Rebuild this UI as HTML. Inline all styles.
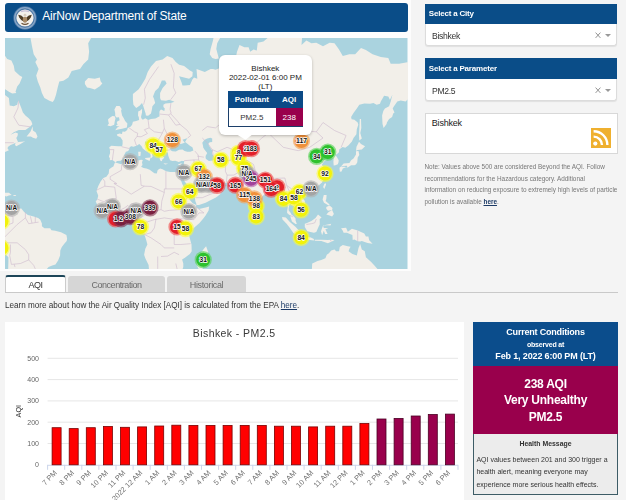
<!DOCTYPE html>
<html><head><meta charset="utf-8">
<style>
*{margin:0;padding:0;box-sizing:border-box}
html,body{width:626px;height:500px;overflow:hidden;background:#f4f4f4;font-family:"Liberation Sans",sans-serif;position:relative}
.a{position:absolute}
.t{position:absolute;white-space:nowrap;line-height:1}
#leftbg{left:0;top:0;width:410.5px;height:271px;background:#fdfdfd}
#hdr{left:5px;top:3px;width:403px;height:29px;background:#0a4d88;border-radius:3px}
#seal{left:13px;top:6px;width:23px;height:23px;border-radius:50%;background:#3f6fa0}
#map{left:5px;top:37.5px;width:402.5px;height:231px;background:#aad3df;overflow:hidden}
.sh{background:#0a4d88;color:#fff;font-weight:bold;font-size:8px;letter-spacing:-0.15px}
.sel{background:#fff;border:1px solid #dcdcdc;border-top:none;border-radius:0 0 3px 3px;box-shadow:0 1px 1px rgba(0,0,0,.08)}
.tab{background:#d6d6d6;border-radius:3px 3px 0 0;color:#777;font-size:9px;text-align:center}
#wrap{position:absolute;left:0;top:0;width:626px;height:500px;filter:blur(0.3px)}
</style></head><body><div id="wrap">
<div class="a" id="leftbg"></div>
<div class="a" id="hdr"></div>
<svg class="a" style="left:13px;top:6px" width="24" height="24" viewBox="0 0 24 24"><circle cx="12" cy="12" r="11.7" fill="#4d78a6"/><circle cx="12" cy="12" r="10.3" fill="none" stroke="#8aa8c8" stroke-width="1.2"/><circle cx="12" cy="12" r="8.6" fill="#f3f1ec"/><path d="M5.2 8.8 Q8.5 9 10.6 11.5 L10.6 15.5 Q8 14.5 6.2 11.5Z M18.8 8.8 Q15.5 9 13.4 11.5 L13.4 15.5 Q16 14.5 17.8 11.5Z" fill="#4e3d26"/><ellipse cx="12" cy="13.8" rx="2.2" ry="3" fill="#a88a66"/><circle cx="12" cy="9.2" r="1.4" fill="#d8cfc0"/><path d="M8.5 17.2 Q12 19.5 15.5 17.2" stroke="#6e5236" stroke-width="1.1" fill="none"/><path d="M8 5.5 Q12 4.2 16 5.5" stroke="#c8c0d8" stroke-width="1.4" fill="none"/></svg>
<div class="t" style="left:42.3px;top:10.3px;font-size:12px;letter-spacing:-0.2px;color:#fff">AirNow Department of State</div>
<!--MAP--><svg class="a" style="left:5px;top:37.5px" width="402.5" height="231" viewBox="0 0 402.5 231">
<rect width="402.5" height="231" fill="#aad3df"/>
<path fill="#f2efe9" d="M110.3,124.3L109.8,124.8L108.4,128.4L107.0,129.2L104.2,131.3L103.7,135.4L101.4,138.8L98.3,140.1L95.6,143.5L93.3,147.9L91.5,153.0L92.7,156.2L93.2,157.8L92.3,161.4L90.7,163.6L91.8,165.7L92.0,167.7L94.8,169.9L97.0,172.4L97.8,174.1L99.8,176.1L101.7,177.8L106.4,180.8L107.2,180.9L113.0,179.4L116.3,180.3L119.3,179.1L121.6,178.1L125.2,177.6L127.9,178.6L129.5,181.1L132.0,180.8L133.7,180.6L135.6,181.6L135.8,184.1L135.3,186.5L135.0,189.0L134.1,189.9L136.1,193.2L139.1,196.0L139.9,198.1L141.4,202.8L142.4,206.5L140.3,210.7L139.1,216.7L140.3,220.2L143.6,227.1L144.1,232.7L144.4,240.2L174.1,240.2L178.3,229.1L178.3,225.5L177.5,222.8L177.1,221.6L179.9,219.8L184.9,215.9L186.7,213.3L186.5,206.5L184.6,199.5L184.1,196.5L185.2,194.8L187.4,191.5L189.9,188.9L194.5,184.9L198.1,180.8L200.6,177.4L203.6,172.4L204.2,168.6L200.6,169.4L194.0,170.9L191.0,168.9L191.2,167.2L191.5,167.0L194.0,166.9L200.6,164.8L205.9,161.9L210.5,159.7L213.0,157.9L215.1,156.2L216.8,153.6L218.4,150.2L216.5,148.0L213.7,146.4L212.7,144.6L212.7,142.9L213.5,141.6L215.5,144.0L221.3,145.1L229.5,144.8L230.7,145.9L231.2,147.3L232.8,148.8L233.7,150.2L235.3,152.7L238.9,151.8L239.6,152.7L239.9,156.2L241.6,162.3L243.2,166.7L244.9,169.9L245.6,171.6L247.7,174.8L248.9,173.4L250.7,171.1L251.5,169.1L252.3,166.4L251.8,162.3L255.6,160.4L257.3,158.5L260.1,155.7L263.1,153.9L263.4,151.8L265.4,151.4L267.5,151.1L270.0,150.0L271.3,150.4L272.2,153.0L274.2,155.3L275.5,157.9L275.5,161.4L277.5,161.7L279.9,160.5L280.9,160.7L281.1,163.1L282.4,166.5L282.8,169.1L282.1,173.3L282.1,175.1L284.1,176.8L285.4,177.4L285.6,179.4L287.0,183.6L290.5,186.1L291.2,186.1L291.8,185.9L290.5,182.2L290.7,180.8L288.5,177.9L286.6,176.8L285.4,174.4L283.7,172.4L283.6,170.7L284.1,167.4L284.9,166.0L285.7,165.7L286.6,167.0L289.0,167.9L289.9,169.1L292.3,170.7L292.8,173.9L295.3,172.4L296.1,171.1L299.0,169.6L300.1,168.7L300.3,165.7L299.6,162.4L298.5,161.2L296.1,158.8L294.3,156.6L295.6,153.9L296.0,153.0L298.1,151.8L299.8,151.8L301.9,153.9L302.3,152.3L304.7,151.3L307.4,150.6L308.5,150.4L311.3,149.3L313.0,148.2L314.7,146.6L317.1,144.6L317.3,143.7L318.8,140.9L320.4,139.0L321.1,136.4L321.1,134.3L319.6,132.3L319.1,131.2L318.0,128.4L316.8,126.8L318.5,124.3L319.6,123.1L322.1,121.7L320.4,121.3L318.0,121.7L316.3,121.3L315.5,119.8L314.2,118.1L316.8,116.4L319.6,114.2L321.8,114.9L320.1,118.1L320.6,118.3L323.7,116.4L325.1,116.2L326.2,117.0L326.6,119.8L328.7,121.3L328.4,123.7L328.7,127.4L330.4,127.2L332.8,126.2L333.5,124.3L333.7,122.3L332.0,119.2L330.4,117.0L332.0,116.0L334.0,114.2L334.2,111.6L337.6,109.1L340.3,109.8L343.6,107.3L346.9,103.6L348.5,100.0L351.4,96.3L351.8,91.2L353.3,86.7L352.7,84.5L349.4,81.7L346.6,81.2L346.1,78.9L348.5,75.1L351.8,70.5L354.3,66.7L359.3,65.4L365.1,65.8L368.4,65.1L371.7,66.7L375.0,65.8L375.8,63.5L379.1,57.7L383.3,58.4L384.9,61.8L387.4,56.7L385.7,63.5L384.1,68.3L379.9,70.5L378.3,73.0L377.1,77.4L377.5,85.9L378.6,89.9L381.6,85.9L381.9,84.5L384.1,80.9L387.1,78.9L388.2,75.4L389.5,74.5L387.7,70.5L389.0,68.3L392.3,63.5L395.7,62.5L400.6,63.5L402.3,61.8L417.1,56.7L417.1,28.6L408.9,24.8L402.3,24.3L394.0,25.8L385.7,25.8L383.3,19.9L375.8,18.9L367.6,16.3L360.9,12.1L356.0,9.9L350.2,16.3L344.4,16.3L337.8,17.9L333.7,11.0L329.5,5.3L324.6,4.7L318.0,8.2L311.3,4.7L306.4,5.3L301.4,2.4L296.5,7.1L298.1,-13.9L284.9,-25.1L263.4,-25.1L263.4,-0.7L258.5,3.6L252.7,4.7L251.8,12.6L248.5,11.5L245.2,13.7L243.6,9.3L239.4,9.3L234.5,7.1L232.0,13.7L230.4,21.4L230.0,26.2L227.0,27.7L220.4,24.8L216.3,29.5L210.5,31.8L208.0,30.9L205.6,30.9L199.8,34.0L191.5,30.9L192.3,40.7L189.0,39.5L187.4,41.6L184.9,47.1L179.9,47.5L177.5,47.5L176.6,44.4L174.1,38.2L179.1,39.5L184.1,40.7L187.4,38.2L187.7,34.0L184.9,32.6L179.1,28.1L174.1,26.7L170.8,23.9L167.5,19.9L162.2,17.9L157.6,21.4L151.0,22.9L146.0,28.6L142.7,34.0L140.3,40.7L137.0,46.3L133.7,51.2L127.9,56.0L127.9,61.8L128.4,66.7L131.2,69.9L134.5,67.7L137.0,65.1L138.1,67.4L139.1,70.8L140.6,75.4L140.9,77.4L143.1,77.7L146.0,75.4L146.9,71.5L147.4,68.3L150.2,65.1L149.0,60.8L148.0,58.4L150.2,53.1L153.5,50.1L155.6,45.5L156.8,42.4L160.1,42.4L161.6,45.5L157.6,50.1L155.1,54.9L155.1,60.1L156.0,62.2L160.9,62.8L164.2,61.8L169.5,63.8L165.9,65.1L160.4,65.4L158.4,66.7L158.4,69.0L159.8,70.5L159.3,73.0L156.0,71.5L154.6,73.0L154.3,76.0L154.6,78.3L152.7,79.2L150.5,80.6L146.0,80.9L143.1,82.0L140.3,80.3L137.8,81.7L136.5,80.6L136.0,78.9L137.0,74.5L137.1,70.8L135.3,72.4L133.2,73.6L133.0,77.4L133.8,79.2L134.1,82.0L131.2,83.1L127.9,83.7L127.2,86.4L125.9,88.6L123.7,89.6L122.6,90.2L122.2,92.0L119.9,93.8L117.5,93.5L117.0,96.0L114.6,95.5L111.8,96.5L112.5,98.0L115.5,99.2L117.6,102.4L117.6,105.9L117.1,108.2L113.3,108.2L106.4,107.7L104.2,109.3L104.9,111.6L105.1,114.9L103.9,118.5L104.9,120.4L104.7,122.3L107.4,121.9L109.2,123.3L110.3,124.3Z"/>
<path fill="#aad3df" d="M110.3,124.6L116.3,126.2L118.6,125.0L124.6,122.7L129.5,122.3L133.7,122.5L136.0,121.7L137.8,122.1L137.0,124.3L137.5,127.0L136.1,128.8L138.6,130.0L141.4,130.6L144.7,131.7L149.4,135.2L151.8,135.6L152.7,132.1L155.1,130.6L157.6,131.2L159.3,132.3L161.3,133.3L165.1,133.9L169.0,133.9L173.0,133.7L176.1,133.7L177.1,132.1L177.5,130.8L178.3,128.6L178.9,126.4L178.8,125.4L179.3,123.1L177.5,123.1L177.0,122.7L173.8,124.1L170.3,122.7L167.5,123.1L165.1,122.3L163.9,119.4L163.1,117.0L163.1,116.0L162.6,114.2L157.5,114.7L158.6,116.4L157.3,118.1L159.3,119.8L158.8,120.2L157.5,121.3L156.8,123.3L155.5,122.7L154.5,120.6L155.1,119.2L153.8,117.7L151.8,114.9L151.7,112.0L150.2,110.7L146.7,108.2L144.4,105.9L143.4,104.0L142.4,103.3L139.9,103.8L140.1,106.6L141.9,108.0L143.6,111.1L146.0,112.7L147.5,113.6L149.2,114.7L150.2,115.7L148.0,115.1L146.9,117.0L147.9,118.1L146.9,119.4L145.4,120.4L145.7,117.0L144.9,115.5L143.1,114.2L141.1,113.1L139.9,112.2L137.8,110.5L136.6,108.2L134.3,106.1L132.0,107.5L128.5,108.7L126.2,108.2L124.6,109.3L124.6,110.5L123.2,112.9L120.9,113.8L119.1,117.0L119.9,118.7L117.9,121.0L115.6,122.7L112.3,122.9L110.7,124.1ZM167.5,113.3L170.8,113.6L174.1,111.8L177.5,111.6L179.6,113.1L182.4,113.8L185.2,113.8L188.4,112.5L187.4,109.3L185.2,108.0L182.1,105.4L180.1,104.0L182.4,100.0L184.4,99.5L177.5,101.7L179.8,104.7L175.8,106.1L175.0,105.7L173.3,103.8L175.0,102.4L170.3,101.2L168.7,103.6L167.0,106.6L165.9,108.9L165.1,110.5L165.9,112.5ZM200.6,101.2L198.9,102.4L197.3,104.7L198.1,108.2L198.1,109.3L199.4,111.6L202.2,115.1L200.6,118.1L200.6,120.2L201.4,121.3L203.9,122.9L208.0,122.5L208.9,121.5L208.5,118.1L207.2,116.0L206.9,113.8L208.0,112.7L206.4,111.6L204.2,108.0L203.1,105.9L204.7,104.3L207.2,104.0L207.2,100.5L205.4,99.7L202.2,100.5ZM173.3,136.2L175.0,139.6L175.5,141.3L177.5,146.4L179.9,150.9L181.1,155.2L183.2,157.9L184.9,162.1L187.7,165.2L190.2,166.5L191.2,167.2L191.5,166.2L190.3,163.1L190.0,160.5L189.9,159.7L187.4,156.2L184.4,151.8L182.4,147.3L179.9,143.7L177.6,139.8L177.3,137.1L176.1,140.3L173.5,136.4ZM213.0,141.6L212.7,141.5L209.7,142.6L206.4,141.1L203.6,138.3L202.2,136.0L199.8,136.2L198.9,137.5L200.3,140.7L202.2,142.7L203.6,144.6L204.2,143.5L204.9,145.1L204.7,146.8L209.5,146.4L211.0,145.0L212.2,143.7L212.7,142.9Z"/>
<path fill="#f2efe9" d="M3.9,-42.5L25.4,-0.7L27.0,8.2L28.7,16.3L32.0,21.4L30.3,23.9L33.6,30.9L31.2,37.4L32.8,43.6L35.3,49.4L36.9,54.9L39.4,60.1L44.4,62.8L47.7,64.1L49.3,61.8L51.0,56.7L52.7,49.4L54.3,43.6L58.4,42.8L63.4,39.5L66.7,33.1L75.0,30.9L78.3,26.2L83.2,21.4L84.1,13.7L83.2,5.3L86.5,-0.7L89.8,-42.5ZM79.9,43.6L83.2,39.9L89.8,40.7L94.8,39.5L95.6,43.2L97.3,45.5L94.8,48.2L89.8,51.6L84.9,50.1L82.1,49.4L79.9,45.9ZM110.2,92.2L113.0,91.5L117.1,90.7L121.9,89.4L122.4,85.6L120.1,83.1L118.8,80.3L117.1,77.4L116.1,72.7L116.6,71.1L114.6,68.0L111.3,68.0L109.4,71.5L110.2,75.1L110.2,78.0L111.5,79.5L114.0,79.2L114.6,82.3L112.2,83.4L111.7,85.1L112.7,86.4L110.8,87.8L112.7,88.3L114.6,88.6L112.2,89.4ZM109.7,78.3L107.5,78.0L105.5,79.2L103.1,81.2L103.2,83.1L103.9,85.6L102.4,87.5L105.5,88.3L109.2,86.7L109.7,83.7L110.5,80.3ZM140.1,120.0L145.4,119.6L144.6,122.9L140.3,121.0ZM133.2,113.8L135.8,113.8L135.5,117.7L133.5,118.3ZM158.4,125.2L163.1,125.8L160.1,126.6ZM173.0,126.4L176.8,125.0L175.6,127.2L173.3,127.0ZM251.5,171.9L252.3,171.9L255.0,175.8L253.8,177.9L252.2,178.3L251.5,175.8ZM201.1,208.2L203.1,214.1L201.6,216.7L198.9,223.7L197.6,230.9L194.0,231.8L191.8,227.3L192.8,221.9L192.3,216.7L196.1,214.7L198.9,210.7ZM320.4,145.0L321.1,146.4L319.3,150.9L318.1,149.1L319.3,145.9ZM299.1,155.9L302.3,154.3L303.1,155.2L301.4,157.6L299.3,157.1ZM336.0,128.4L338.6,125.6L344.4,125.0L346.1,122.3L348.5,120.4L351.0,116.4L351.0,113.3L353.5,112.9L354.3,117.0L352.7,119.6L352.3,124.3L351.0,126.4L349.4,127.2L346.1,127.2L342.8,129.4L339.4,128.8ZM336.1,128.6L334.5,129.8L334.8,133.7L336.6,133.5L337.8,130.4L342.3,128.8L341.9,127.8L337.8,128.0ZM351.0,112.7L351.5,108.7L354.0,103.8L356.0,105.9L360.1,108.2L356.8,111.6L352.7,112.0ZM354.3,102.4L356.8,100.5L355.3,95.0L356.3,89.9L356.0,80.9L354.8,80.9L354.3,91.2L354.0,97.5ZM318.8,157.1L321.6,157.1L321.3,160.9L320.6,163.1L324.6,166.5L323.7,167.4L319.0,164.8L317.6,161.4ZM321.3,169.1L324.6,167.4L327.5,169.9L327.1,171.9L322.9,172.8L321.3,170.7ZM321.3,176.6L323.7,174.1L327.1,172.1L328.9,176.1L327.1,178.6L324.6,177.4ZM299.8,185.7L301.4,185.2L306.4,182.9L310.5,179.9L313.0,176.6L316.6,179.6L314.7,181.1L314.7,186.5L313.8,188.2L311.3,194.0L308.9,194.8L302.3,193.2L299.8,189.0ZM277.1,178.9L280.8,179.6L284.9,184.1L290.7,189.0L294.5,193.2L294.8,197.8L292.3,198.0L288.2,194.8L284.9,189.9L281.6,185.7L277.5,181.6ZM293.5,199.5L294.8,198.1L298.6,198.6L303.1,199.0L305.9,199.6L308.9,201.1L308.9,202.5L303.1,201.8L298.1,201.1L294.8,200.5ZM309.7,201.8L316.3,201.8L322.9,202.0L326.2,201.8L329.5,202.0L327.9,203.1L322.9,205.3L316.3,203.1L309.7,202.8ZM317.1,197.3L318.8,192.7L320.1,196.0L322.6,196.1L320.4,191.2L323.4,189.9L318.8,189.9L318.0,187.4L326.2,185.7L325.4,187.5L318.3,186.9L317.1,189.9L316.0,193.2ZM336.1,190.3L341.1,189.7L342.8,193.7L346.9,190.7L352.7,192.5L359.3,195.6L360.9,198.6L363.4,198.5L364.2,202.3L367.6,205.7L362.6,205.0L356.8,203.1L355.2,203.6L352.7,203.3L349.4,201.5L347.7,202.1L347.4,197.1L341.9,194.8L338.6,194.8L337.8,192.8ZM306.4,240.2L307.2,225.5L308.4,225.1L312.5,223.0L316.3,221.9L320.4,220.2L321.8,216.7L323.9,215.3L326.2,212.6L329.5,211.6L331.2,213.3L334.0,213.3L334.8,209.0L337.8,207.0L342.8,208.2L345.6,208.7L344.4,210.7L343.6,213.3L347.4,215.9L351.8,217.6L353.5,209.9L355.2,206.0L356.8,211.6L359.8,213.3L360.9,219.3L365.9,223.7L369.2,227.3L372.5,230.9L372.5,240.2ZM-3.5,157.3L-0.7,154.6L3.9,154.8L6.7,156.9L3.9,157.6L1.4,158.6L-1.1,157.6ZM-12.6,149.1L-7.7,150.9L-3.1,154.1L-8.5,154.6L-12.6,151.8ZM8.5,157.1L11.2,157.3L10.8,157.9L8.5,157.9ZM-12.6,173.3L-7.7,174.1L-6.0,172.4L-5.2,170.7L-2.7,169.6L-0.1,168.6L1.4,167.5L1.4,169.9L0.9,170.4L3.9,169.1L3.9,168.2L6.4,170.7L8.8,170.6L13.8,170.7L16.3,170.4L17.9,172.4L19.1,174.1L22.9,176.9L28.7,178.4L33.1,180.1L35.3,181.7L36.9,185.4L36.9,188.2L39.4,190.3L45.2,190.3L46.4,192.3L50.2,192.8L56.0,194.3L61.4,197.1L62.1,200.6L61.7,203.1L59.3,205.8L56.8,209.0L55.3,212.4L55.1,217.6L53.1,222.5L50.5,226.4L47.2,227.6L43.6,229.1L40.3,232.7L3.1,232.7L3.4,223.7L3.4,219.3L1.4,217.2L-1.9,215.5L-6.0,211.6L-12.6,201.5ZM-29.2,126.4L-6.0,126.4L-2.7,114.9L0.6,113.8L3.9,112.2L2.6,110.5L2.9,109.1L5.5,107.1L8.8,105.7L10.5,104.7L13.0,104.0L11.3,100.0L12.5,98.0L13.0,95.5L10.5,94.5L5.5,96.8L8.8,94.3L13.8,92.0L20.4,92.0L25.0,88.8L27.4,86.2L26.2,83.1L23.7,80.3L20.4,77.4L17.9,74.5L16.3,69.9L13.3,62.5L12.2,66.7L8.8,68.3L4.7,67.4L3.9,60.1L0.6,57.4L-2.7,55.6L-9.3,55.6L-29.2,56.7ZM10.0,107.1L11.3,108.2L15.5,105.9L20.4,102.9L18.8,103.6L13.8,104.0L10.5,104.7ZM21.6,98.5L25.4,93.8L27.7,88.3L27.9,92.5L30.8,94.5L32.5,98.5L31.2,100.7L27.9,99.7L25.9,98.5ZM17.3,39.1L14.6,45.5L12.2,48.6L10.5,53.8L11.3,54.9L7.2,55.6L3.9,53.8L0.6,51.6L-4.4,48.2L-9.3,47.5L-12.6,51.2L-29.2,-3.8L-12.6,4.2L-7.7,9.9L-2.7,13.7L2.2,20.9L6.4,22.4L8.8,27.7L9.7,33.1L14.6,37.4ZM204.7,16.3L207.2,19.9L210.5,20.9L213.8,20.4L211.3,11.0L212.2,5.3L217.1,-3.8L218.8,-13.9L210.5,-10.4L208.0,2.4L205.6,11.0Z"/>
<path fill="none" stroke="#cdb9cd" stroke-width="0.6" d="M165.9,26.2L169.2,35.3L168.4,49.4L170.8,54.9L165.6,61.8M153.5,28.6L144.4,41.6L139.4,51.2L140.3,60.1L138.6,66.7M165.9,65.1L165.1,71.5L166.2,75.4L163.4,76.9L154.3,76.0M158.4,81.7L159.3,90.4L157.3,95.0L149.4,93.8L144.1,89.9L143.1,82.0M144.1,89.9L139.4,91.7L142.4,95.5L136.1,98.8L132.0,98.5L132.8,95.3L129.5,93.8L123.7,89.6M132.0,98.5L129.5,101.9L131.2,107.1L132.0,107.5M116.6,108.7L124.9,110.7M104.9,111.6L108.9,111.6L108.0,117.0L107.4,121.9M159.3,90.4L162.6,96.8L166.2,103.6L168.7,104.0M157.3,95.0L156.0,97.5L152.7,102.9L146.0,101.2L142.4,103.3M156.8,106.4L166.2,103.6M151.8,111.6L156.8,113.3L162.6,112.2L165.9,111.6M163.4,76.9L170.8,87.2L175.0,86.4L182.4,92.5L185.7,97.5L182.7,100.0M165.9,76.0L172.5,83.1L175.0,86.4M197.3,92.5L202.2,88.6L210.5,89.9L220.4,81.7L233.7,78.9L245.2,81.7L251.8,89.9L263.4,95.0L281.6,87.2L296.5,92.5L311.3,93.8L318.0,84.5L329.5,92.5L341.1,97.5L336.1,109.3M263.4,95.0L278.3,109.3L293.2,112.7L304.7,109.3L318.0,100.0L311.3,93.8M197.3,100.0L202.2,104.7L207.2,111.6L212.2,113.8L222.1,109.3L233.7,113.8L241.9,109.3L251.8,104.7L256.8,100.0L263.4,95.0M207.2,111.6L208.9,121.7L220.4,123.3L227.0,121.7L237.0,122.3L241.9,122.3M192.3,118.1L198.9,119.2M220.4,123.3L220.4,133.3L222.1,137.1L221.3,145.1M241.9,122.3L235.3,129.4L233.7,134.3L228.7,137.1L222.1,137.1M241.9,122.3L248.5,126.4L250.2,132.3L253.5,136.2L265.1,140.3L271.7,140.3L279.9,140.0L281.6,147.3L286.6,150.9L294.8,149.5L298.1,151.8M241.9,122.3L243.6,131.3L237.0,140.0L235.3,146.4L232.8,148.2M265.1,150.9L266.7,143.7L271.7,145.5L272.5,152.7M281.6,147.3L284.9,154.5L293.2,157.9L296.5,164.8L294.8,169.9M284.9,154.5L286.6,157.9L291.5,163.1L289.0,168.2M284.9,177.4L287.4,178.6L288.5,177.9M179.1,122.7L189.0,121.9L193.7,121.9L193.2,117.0L189.9,113.1M179.9,137.1L180.8,133.3L184.1,132.3L197.3,138.1L198.9,139.0M184.1,132.3L189.0,127.4L189.0,121.9M193.7,121.9L195.6,125.4L195.6,130.4L198.9,136.2M178.3,130.4L179.9,131.3L184.1,132.3M190.7,159.7L197.3,159.7L205.6,156.2L210.5,154.5L211.3,149.7L204.7,146.8M116.8,126.4L116.3,132.3L105.2,138.6L105.2,141.3L111.7,145.5L108.9,145.5L121.6,153.0L126.2,156.2L139.4,148.2L146.0,148.4L159.3,154.5L159.3,150.9L160.9,150.9L160.9,133.3M135.3,136.2L136.1,147.3L139.4,148.2M160.9,150.9L180.4,150.9M98.1,140.7L99.8,143.7L99.8,148.2L91.5,152.2M99.8,148.2L109.7,149.1L111.3,160.5L100.6,162.3L99.4,164.0L92.3,161.1M124.6,169.1L126.2,165.7L132.8,166.5L141.9,165.7L144.4,171.6L145.2,174.9L156.0,171.6L159.3,173.3L164.2,172.4L175.8,171.6L179.1,164.8L182.4,158.8M159.3,154.5L156.8,163.1L156.0,171.6M139.4,184.9L149.4,181.6L159.3,179.9L170.8,181.6L175.8,180.8L179.1,180.8L187.4,181.6L189.0,181.6L194.0,174.9L198.9,174.9L191.0,168.9M175.8,180.8L175.8,189.9L184.9,195.6M169.2,189.9L175.8,189.9M139.4,196.5L146.0,199.8L156.0,206.5L159.3,209.9L169.2,209.9M169.2,206.5L175.8,206.5L185.7,205.7M156.0,218.5L162.6,218.1L169.2,214.3L174.1,216.7M152.7,218.5L152.7,225.5L152.7,230.9M170.8,225.5L172.5,232.7M103.1,174.1L106.4,174.1L106.4,171.3L110.5,170.7L115.0,172.1L119.6,169.9L122.9,167.4L124.6,169.1M115.0,172.1L114.6,179.9M121.3,177.9L122.1,169.6M124.1,177.6L125.6,168.9M134.5,180.6L139.4,177.4L143.6,174.9L145.2,174.9M139.4,184.9L138.3,188.9L139.4,196.5M151.0,180.8L149.4,189.9L146.0,194.8L139.4,196.5M168.4,182.4L168.4,189.9L169.2,196.5L169.2,206.5M8.8,104.7L2.2,104.7L-3.9,104.7L-12.6,109.3M13.8,62.5L13.0,69.9L8.8,78.9L13.8,87.2L25.2,88.8M-0.1,168.6L0.6,176.6L8.0,178.3L8.0,184.9L3.9,186.5M20.4,174.1L20.4,179.9L12.2,186.5L3.9,194.8L-1.1,199.8L0.6,204.8L12.2,204.8L20.4,211.6L23.7,216.7L23.7,221.9L28.7,227.3L30.3,230.9M20.4,179.9L23.7,185.7L30.3,184.6L33.6,184.1M25.4,178.3L27.0,185.2M30.3,178.6L30.3,184.6M5.5,206.5L5.5,214.1L4.7,217.6L6.4,226.4L15.5,225.5L23.7,221.9M9.2,226.2L10.0,229.1M311.3,181.1L309.7,184.9L306.4,185.7L301.4,186.5M352.7,192.5L352.7,203.3M326.2,203.5L325.4,201.8"/>
</svg><!--/MAP--><!--MARK--><svg class="a" style="left:5px;top:37.5px" width="402.5" height="231" viewBox="5 37.5 402.5 231">
<circle cx="11.5" cy="207.6" r="8.6" fill="rgba(175,175,175,0.6)"/><circle cx="11.5" cy="207.6" r="7.0" fill="#a4a4a4"/>
<circle cx="1.5" cy="221" r="8.6" fill="rgba(255,255,40,0.55)"/><circle cx="1.5" cy="221" r="7.0" fill="#f2f20a"/>
<circle cx="1.5" cy="247.5" r="8.6" fill="rgba(255,255,40,0.55)"/><circle cx="1.5" cy="247.5" r="7.0" fill="#f2f20a"/>
<circle cx="130.1" cy="161.2" r="8.6" fill="rgba(175,175,175,0.6)"/><circle cx="130.1" cy="161.2" r="7.0" fill="#a4a4a4"/>
<circle cx="153.1" cy="144.9" r="8.6" fill="rgba(255,255,40,0.55)"/><circle cx="153.1" cy="144.9" r="7.0" fill="#f2f20a"/>
<circle cx="159.3" cy="149.2" r="8.6" fill="rgba(255,255,40,0.55)"/><circle cx="159.3" cy="149.2" r="7.0" fill="#f2f20a"/>
<circle cx="172.3" cy="139.6" r="8.6" fill="rgba(245,160,80,0.6)"/><circle cx="172.3" cy="139.6" r="7.0" fill="#f0903a"/>
<circle cx="102.1" cy="210.4" r="8.6" fill="rgba(175,175,175,0.6)"/><circle cx="102.1" cy="210.4" r="7.0" fill="#a4a4a4"/>
<circle cx="112.4" cy="206" r="8.6" fill="rgba(175,175,175,0.6)"/><circle cx="112.4" cy="206" r="7.0" fill="#a4a4a4"/>
<circle cx="115.6" cy="218.5" r="8.6" fill="rgba(240,70,70,0.6)"/><circle cx="115.6" cy="218.5" r="7.0" fill="#e3202a"/>
<circle cx="121" cy="218.3" r="8.6" fill="rgba(130,50,80,0.6)"/><circle cx="121" cy="218.3" r="7.0" fill="#7a2040"/>
<circle cx="130.3" cy="216.2" r="8.6" fill="rgba(130,50,80,0.6)"/><circle cx="130.3" cy="216.2" r="7.0" fill="#7a2040"/>
<circle cx="136" cy="210.4" r="8.6" fill="rgba(175,175,175,0.6)"/><circle cx="136" cy="210.4" r="7.0" fill="#a4a4a4"/>
<circle cx="150" cy="207.3" r="8.6" fill="rgba(130,50,80,0.6)"/><circle cx="150" cy="207.3" r="7.0" fill="#7a2040"/>
<circle cx="140.5" cy="226.4" r="8.6" fill="rgba(255,255,40,0.55)"/><circle cx="140.5" cy="226.4" r="7.0" fill="#f2f20a"/>
<circle cx="183.9" cy="171.9" r="8.6" fill="rgba(175,175,175,0.6)"/><circle cx="183.9" cy="171.9" r="7.0" fill="#a4a4a4"/>
<circle cx="198.3" cy="168.6" r="8.6" fill="rgba(255,255,40,0.55)"/><circle cx="198.3" cy="168.6" r="7.0" fill="#f2f20a"/>
<circle cx="204.2" cy="176.3" r="8.6" fill="rgba(245,160,80,0.6)"/><circle cx="204.2" cy="176.3" r="7.0" fill="#f0903a"/>
<circle cx="209" cy="184.2" r="8.6" fill="rgba(175,175,175,0.6)"/><circle cx="209" cy="184.2" r="7.0" fill="#a4a4a4"/>
<circle cx="201.4" cy="184.2" r="8.6" fill="rgba(175,175,175,0.6)"/><circle cx="201.4" cy="184.2" r="7.0" fill="#a4a4a4"/>
<circle cx="217" cy="184.8" r="8.6" fill="rgba(240,70,70,0.6)"/><circle cx="217" cy="184.8" r="7.0" fill="#e3202a"/>
<circle cx="189.8" cy="190.7" r="8.6" fill="rgba(255,255,40,0.55)"/><circle cx="189.8" cy="190.7" r="7.0" fill="#f2f20a"/>
<circle cx="178.7" cy="200.9" r="8.6" fill="rgba(255,255,40,0.55)"/><circle cx="178.7" cy="200.9" r="7.0" fill="#f2f20a"/>
<circle cx="188.9" cy="211.1" r="8.6" fill="rgba(175,175,175,0.6)"/><circle cx="188.9" cy="211.1" r="7.0" fill="#a4a4a4"/>
<circle cx="177" cy="226.4" r="8.6" fill="rgba(240,70,70,0.6)"/><circle cx="177" cy="226.4" r="7.0" fill="#e3202a"/>
<circle cx="185.5" cy="228.1" r="8.6" fill="rgba(255,255,40,0.55)"/><circle cx="185.5" cy="228.1" r="7.0" fill="#f2f20a"/>
<circle cx="203.2" cy="259.2" r="8.6" fill="rgba(80,210,80,0.6)"/><circle cx="203.2" cy="259.2" r="7.0" fill="#2dc12d"/>
<circle cx="220.8" cy="159.5" r="8.6" fill="rgba(255,255,40,0.55)"/><circle cx="220.8" cy="159.5" r="7.0" fill="#f2f20a"/>
<circle cx="238.5" cy="152.5" r="8.6" fill="rgba(255,255,40,0.55)"/><circle cx="238.5" cy="152.5" r="7.0" fill="#f2f20a"/>
<circle cx="238.5" cy="157.5" r="8.6" fill="rgba(255,255,40,0.55)"/><circle cx="238.5" cy="157.5" r="7.0" fill="#f2f20a"/>
<circle cx="245.5" cy="148.2" r="8.6" fill="rgba(240,70,70,0.6)"/><circle cx="245.5" cy="148.2" r="7.0" fill="#e3202a"/>
<circle cx="251.5" cy="148.2" r="8.6" fill="rgba(240,70,70,0.6)"/><circle cx="251.5" cy="148.2" r="7.0" fill="#e3202a"/>
<circle cx="244.5" cy="167.8" r="8.6" fill="rgba(255,255,40,0.55)"/><circle cx="244.5" cy="167.8" r="7.0" fill="#f2f20a"/>
<circle cx="247.1" cy="173" r="8.6" fill="rgba(175,175,175,0.6)"/><circle cx="247.1" cy="173" r="7.0" fill="#a4a4a4"/>
<circle cx="251" cy="178.2" r="8.6" fill="rgba(180,90,170,0.6)"/><circle cx="251" cy="178.2" r="7.0" fill="#a3429a"/>
<circle cx="235.4" cy="184.7" r="8.6" fill="rgba(240,70,70,0.6)"/><circle cx="235.4" cy="184.7" r="7.0" fill="#e3202a"/>
<circle cx="244.5" cy="194.5" r="8.6" fill="rgba(245,160,80,0.6)"/><circle cx="244.5" cy="194.5" r="7.0" fill="#f0903a"/>
<circle cx="256.2" cy="205.5" r="8.6" fill="rgba(255,255,40,0.55)"/><circle cx="256.2" cy="205.5" r="7.0" fill="#f2f20a"/>
<circle cx="254.3" cy="198.4" r="8.6" fill="rgba(245,160,80,0.6)"/><circle cx="254.3" cy="198.4" r="7.0" fill="#f0903a"/>
<circle cx="256.2" cy="215.9" r="8.6" fill="rgba(255,255,40,0.55)"/><circle cx="256.2" cy="215.9" r="7.0" fill="#f2f20a"/>
<circle cx="265.3" cy="179.5" r="8.6" fill="rgba(240,70,70,0.6)"/><circle cx="265.3" cy="179.5" r="7.0" fill="#e3202a"/>
<circle cx="277" cy="186.7" r="8.6" fill="rgba(240,70,70,0.6)"/><circle cx="277" cy="186.7" r="7.0" fill="#e3202a"/>
<circle cx="271.2" cy="188.6" r="8.6" fill="rgba(240,70,70,0.6)"/><circle cx="271.2" cy="188.6" r="7.0" fill="#e3202a"/>
<circle cx="283.5" cy="198.4" r="8.6" fill="rgba(255,255,40,0.55)"/><circle cx="283.5" cy="198.4" r="7.0" fill="#f2f20a"/>
<circle cx="299.4" cy="191.5" r="8.6" fill="rgba(255,255,40,0.55)"/><circle cx="299.4" cy="191.5" r="7.0" fill="#f2f20a"/>
<circle cx="293.9" cy="197" r="8.6" fill="rgba(255,255,40,0.55)"/><circle cx="293.9" cy="197" r="7.0" fill="#f2f20a"/>
<circle cx="311" cy="188.3" r="8.6" fill="rgba(175,175,175,0.6)"/><circle cx="311" cy="188.3" r="7.0" fill="#a4a4a4"/>
<circle cx="301.1" cy="209.3" r="8.6" fill="rgba(255,255,40,0.55)"/><circle cx="301.1" cy="209.3" r="7.0" fill="#f2f20a"/>
<circle cx="301.1" cy="237" r="8.6" fill="rgba(255,255,40,0.55)"/><circle cx="301.1" cy="237" r="7.0" fill="#f2f20a"/>
<circle cx="301.5" cy="140.5" r="8.6" fill="rgba(245,160,80,0.6)"/><circle cx="301.5" cy="140.5" r="7.0" fill="#f0903a"/>
<circle cx="316.6" cy="155.8" r="8.6" fill="rgba(80,210,80,0.6)"/><circle cx="316.6" cy="155.8" r="7.0" fill="#2dc12d"/>
<circle cx="327.8" cy="151.6" r="8.6" fill="rgba(80,210,80,0.6)"/><circle cx="327.8" cy="151.6" r="7.0" fill="#2dc12d"/>
<circle cx="325" cy="173" r="8.6" fill="rgba(255,255,40,0.55)"/><circle cx="325" cy="173" r="7.0" fill="#f2f20a"/>
<text x="11.5" y="209.9" text-anchor="middle" font-size="8" font-weight="bold" fill="#111" stroke="#fff" stroke-width="1.7" stroke-linejoin="round" paint-order="stroke" textLength="11.0" lengthAdjust="spacingAndGlyphs">N/A</text>
<text x="1.5" y="223.3" text-anchor="middle" font-size="8" font-weight="bold" fill="#111" stroke="#fff" stroke-width="1.7" stroke-linejoin="round" paint-order="stroke" textLength="3.7" lengthAdjust="spacingAndGlyphs">3</text>
<text x="130.1" y="163.5" text-anchor="middle" font-size="8" font-weight="bold" fill="#111" stroke="#fff" stroke-width="1.7" stroke-linejoin="round" paint-order="stroke" textLength="11.0" lengthAdjust="spacingAndGlyphs">N/A</text>
<text x="153.1" y="147.20000000000002" text-anchor="middle" font-size="8" font-weight="bold" fill="#111" stroke="#fff" stroke-width="1.7" stroke-linejoin="round" paint-order="stroke" textLength="7.4" lengthAdjust="spacingAndGlyphs">84</text>
<text x="159.3" y="151.5" text-anchor="middle" font-size="8" font-weight="bold" fill="#111" stroke="#fff" stroke-width="1.7" stroke-linejoin="round" paint-order="stroke" textLength="7.4" lengthAdjust="spacingAndGlyphs">57</text>
<text x="172.3" y="141.9" text-anchor="middle" font-size="8" font-weight="bold" fill="#111" stroke="#fff" stroke-width="1.7" stroke-linejoin="round" paint-order="stroke" textLength="11.1" lengthAdjust="spacingAndGlyphs">128</text>
<text x="102.1" y="212.70000000000002" text-anchor="middle" font-size="8" font-weight="bold" fill="#111" stroke="#fff" stroke-width="1.7" stroke-linejoin="round" paint-order="stroke" textLength="11.0" lengthAdjust="spacingAndGlyphs">N/A</text>
<text x="112.4" y="208.3" text-anchor="middle" font-size="8" font-weight="bold" fill="#111" stroke="#fff" stroke-width="1.7" stroke-linejoin="round" paint-order="stroke" textLength="11.0" lengthAdjust="spacingAndGlyphs">N/A</text>
<text x="115.6" y="220.8" text-anchor="middle" font-size="8" font-weight="bold" fill="#111" stroke="#fff" stroke-width="1.7" stroke-linejoin="round" paint-order="stroke" textLength="3.7" lengthAdjust="spacingAndGlyphs">1</text>
<text x="121" y="220.60000000000002" text-anchor="middle" font-size="8" font-weight="bold" fill="#111" stroke="#fff" stroke-width="1.7" stroke-linejoin="round" paint-order="stroke" textLength="3.7" lengthAdjust="spacingAndGlyphs">2</text>
<text x="130.3" y="218.5" text-anchor="middle" font-size="8" font-weight="bold" fill="#111" stroke="#fff" stroke-width="1.7" stroke-linejoin="round" paint-order="stroke" textLength="11.1" lengthAdjust="spacingAndGlyphs">308</text>
<text x="136" y="212.70000000000002" text-anchor="middle" font-size="8" font-weight="bold" fill="#111" stroke="#fff" stroke-width="1.7" stroke-linejoin="round" paint-order="stroke" textLength="11.0" lengthAdjust="spacingAndGlyphs">N/A</text>
<text x="150" y="209.60000000000002" text-anchor="middle" font-size="8" font-weight="bold" fill="#111" stroke="#fff" stroke-width="1.7" stroke-linejoin="round" paint-order="stroke" textLength="11.1" lengthAdjust="spacingAndGlyphs">339</text>
<text x="140.5" y="228.70000000000002" text-anchor="middle" font-size="8" font-weight="bold" fill="#111" stroke="#fff" stroke-width="1.7" stroke-linejoin="round" paint-order="stroke" textLength="7.4" lengthAdjust="spacingAndGlyphs">78</text>
<text x="183.9" y="174.20000000000002" text-anchor="middle" font-size="8" font-weight="bold" fill="#111" stroke="#fff" stroke-width="1.7" stroke-linejoin="round" paint-order="stroke" textLength="11.0" lengthAdjust="spacingAndGlyphs">N/A</text>
<text x="198.3" y="170.9" text-anchor="middle" font-size="8" font-weight="bold" fill="#111" stroke="#fff" stroke-width="1.7" stroke-linejoin="round" paint-order="stroke" textLength="7.4" lengthAdjust="spacingAndGlyphs">67</text>
<text x="204.2" y="178.60000000000002" text-anchor="middle" font-size="8" font-weight="bold" fill="#111" stroke="#fff" stroke-width="1.7" stroke-linejoin="round" paint-order="stroke" textLength="11.1" lengthAdjust="spacingAndGlyphs">132</text>
<text x="209" y="186.5" text-anchor="middle" font-size="8" font-weight="bold" fill="#111" stroke="#fff" stroke-width="1.7" stroke-linejoin="round" paint-order="stroke" textLength="11.0" lengthAdjust="spacingAndGlyphs">N/A</text>
<text x="201.4" y="186.5" text-anchor="middle" font-size="8" font-weight="bold" fill="#111" stroke="#fff" stroke-width="1.7" stroke-linejoin="round" paint-order="stroke" textLength="11.0" lengthAdjust="spacingAndGlyphs">N/A</text>
<text x="217" y="187.10000000000002" text-anchor="middle" font-size="8" font-weight="bold" fill="#111" stroke="#fff" stroke-width="1.7" stroke-linejoin="round" paint-order="stroke" textLength="7.4" lengthAdjust="spacingAndGlyphs">58</text>
<text x="189.8" y="193.0" text-anchor="middle" font-size="8" font-weight="bold" fill="#111" stroke="#fff" stroke-width="1.7" stroke-linejoin="round" paint-order="stroke" textLength="7.4" lengthAdjust="spacingAndGlyphs">64</text>
<text x="178.7" y="203.20000000000002" text-anchor="middle" font-size="8" font-weight="bold" fill="#111" stroke="#fff" stroke-width="1.7" stroke-linejoin="round" paint-order="stroke" textLength="7.4" lengthAdjust="spacingAndGlyphs">66</text>
<text x="188.9" y="213.4" text-anchor="middle" font-size="8" font-weight="bold" fill="#111" stroke="#fff" stroke-width="1.7" stroke-linejoin="round" paint-order="stroke" textLength="11.0" lengthAdjust="spacingAndGlyphs">N/A</text>
<text x="177" y="228.70000000000002" text-anchor="middle" font-size="8" font-weight="bold" fill="#111" stroke="#fff" stroke-width="1.7" stroke-linejoin="round" paint-order="stroke" textLength="7.4" lengthAdjust="spacingAndGlyphs">15</text>
<text x="185.5" y="230.4" text-anchor="middle" font-size="8" font-weight="bold" fill="#111" stroke="#fff" stroke-width="1.7" stroke-linejoin="round" paint-order="stroke" textLength="7.4" lengthAdjust="spacingAndGlyphs">58</text>
<text x="203.2" y="261.5" text-anchor="middle" font-size="8" font-weight="bold" fill="#111" stroke="#fff" stroke-width="1.7" stroke-linejoin="round" paint-order="stroke" textLength="7.4" lengthAdjust="spacingAndGlyphs">31</text>
<text x="220.8" y="161.8" text-anchor="middle" font-size="8" font-weight="bold" fill="#111" stroke="#fff" stroke-width="1.7" stroke-linejoin="round" paint-order="stroke" textLength="7.4" lengthAdjust="spacingAndGlyphs">58</text>
<text x="238.5" y="154.8" text-anchor="middle" font-size="8" font-weight="bold" fill="#111" stroke="#fff" stroke-width="1.7" stroke-linejoin="round" paint-order="stroke" textLength="3.7" lengthAdjust="spacingAndGlyphs">8</text>
<text x="238.5" y="159.8" text-anchor="middle" font-size="8" font-weight="bold" fill="#111" stroke="#fff" stroke-width="1.7" stroke-linejoin="round" paint-order="stroke" textLength="7.4" lengthAdjust="spacingAndGlyphs">77</text>
<text x="245.5" y="150.5" text-anchor="middle" font-size="8" font-weight="bold" fill="#111" stroke="#fff" stroke-width="1.7" stroke-linejoin="round" paint-order="stroke" textLength="3.7" lengthAdjust="spacingAndGlyphs">2</text>
<text x="251.5" y="150.5" text-anchor="middle" font-size="8" font-weight="bold" fill="#111" stroke="#fff" stroke-width="1.7" stroke-linejoin="round" paint-order="stroke" textLength="11.1" lengthAdjust="spacingAndGlyphs">183</text>
<text x="244.5" y="170.10000000000002" text-anchor="middle" font-size="8" font-weight="bold" fill="#111" stroke="#fff" stroke-width="1.7" stroke-linejoin="round" paint-order="stroke" textLength="7.4" lengthAdjust="spacingAndGlyphs">75</text>
<text x="247.1" y="175.3" text-anchor="middle" font-size="8" font-weight="bold" fill="#111" stroke="#fff" stroke-width="1.7" stroke-linejoin="round" paint-order="stroke" textLength="11.0" lengthAdjust="spacingAndGlyphs">N/A</text>
<text x="251" y="180.5" text-anchor="middle" font-size="8" font-weight="bold" fill="#111" stroke="#fff" stroke-width="1.7" stroke-linejoin="round" paint-order="stroke" textLength="11.1" lengthAdjust="spacingAndGlyphs">245</text>
<text x="235.4" y="187.0" text-anchor="middle" font-size="8" font-weight="bold" fill="#111" stroke="#fff" stroke-width="1.7" stroke-linejoin="round" paint-order="stroke" textLength="11.1" lengthAdjust="spacingAndGlyphs">165</text>
<text x="244.5" y="196.8" text-anchor="middle" font-size="8" font-weight="bold" fill="#111" stroke="#fff" stroke-width="1.7" stroke-linejoin="round" paint-order="stroke" textLength="11.1" lengthAdjust="spacingAndGlyphs">115</text>
<text x="256.2" y="207.8" text-anchor="middle" font-size="8" font-weight="bold" fill="#111" stroke="#fff" stroke-width="1.7" stroke-linejoin="round" paint-order="stroke" textLength="7.4" lengthAdjust="spacingAndGlyphs">98</text>
<text x="254.3" y="200.70000000000002" text-anchor="middle" font-size="8" font-weight="bold" fill="#111" stroke="#fff" stroke-width="1.7" stroke-linejoin="round" paint-order="stroke" textLength="11.1" lengthAdjust="spacingAndGlyphs">138</text>
<text x="256.2" y="218.20000000000002" text-anchor="middle" font-size="8" font-weight="bold" fill="#111" stroke="#fff" stroke-width="1.7" stroke-linejoin="round" paint-order="stroke" textLength="7.4" lengthAdjust="spacingAndGlyphs">83</text>
<text x="265.3" y="181.8" text-anchor="middle" font-size="8" font-weight="bold" fill="#111" stroke="#fff" stroke-width="1.7" stroke-linejoin="round" paint-order="stroke" textLength="11.1" lengthAdjust="spacingAndGlyphs">151</text>
<text x="277" y="189.0" text-anchor="middle" font-size="8" font-weight="bold" fill="#111" stroke="#fff" stroke-width="1.7" stroke-linejoin="round" paint-order="stroke" textLength="3.7" lengthAdjust="spacingAndGlyphs">2</text>
<text x="271.2" y="190.9" text-anchor="middle" font-size="8" font-weight="bold" fill="#111" stroke="#fff" stroke-width="1.7" stroke-linejoin="round" paint-order="stroke" textLength="11.1" lengthAdjust="spacingAndGlyphs">164</text>
<text x="283.5" y="200.70000000000002" text-anchor="middle" font-size="8" font-weight="bold" fill="#111" stroke="#fff" stroke-width="1.7" stroke-linejoin="round" paint-order="stroke" textLength="7.4" lengthAdjust="spacingAndGlyphs">84</text>
<text x="299.4" y="193.8" text-anchor="middle" font-size="8" font-weight="bold" fill="#111" stroke="#fff" stroke-width="1.7" stroke-linejoin="round" paint-order="stroke" textLength="7.4" lengthAdjust="spacingAndGlyphs">62</text>
<text x="293.9" y="199.3" text-anchor="middle" font-size="8" font-weight="bold" fill="#111" stroke="#fff" stroke-width="1.7" stroke-linejoin="round" paint-order="stroke" textLength="7.4" lengthAdjust="spacingAndGlyphs">58</text>
<text x="311" y="190.60000000000002" text-anchor="middle" font-size="8" font-weight="bold" fill="#111" stroke="#fff" stroke-width="1.7" stroke-linejoin="round" paint-order="stroke" textLength="11.0" lengthAdjust="spacingAndGlyphs">N/A</text>
<text x="301.1" y="211.60000000000002" text-anchor="middle" font-size="8" font-weight="bold" fill="#111" stroke="#fff" stroke-width="1.7" stroke-linejoin="round" paint-order="stroke" textLength="7.4" lengthAdjust="spacingAndGlyphs">56</text>
<text x="301.1" y="239.3" text-anchor="middle" font-size="8" font-weight="bold" fill="#111" stroke="#fff" stroke-width="1.7" stroke-linejoin="round" paint-order="stroke" textLength="7.4" lengthAdjust="spacingAndGlyphs">84</text>
<text x="301.5" y="142.8" text-anchor="middle" font-size="8" font-weight="bold" fill="#111" stroke="#fff" stroke-width="1.7" stroke-linejoin="round" paint-order="stroke" textLength="11.1" lengthAdjust="spacingAndGlyphs">117</text>
<text x="316.6" y="158.10000000000002" text-anchor="middle" font-size="8" font-weight="bold" fill="#111" stroke="#fff" stroke-width="1.7" stroke-linejoin="round" paint-order="stroke" textLength="7.4" lengthAdjust="spacingAndGlyphs">34</text>
<text x="327.8" y="153.9" text-anchor="middle" font-size="8" font-weight="bold" fill="#111" stroke="#fff" stroke-width="1.7" stroke-linejoin="round" paint-order="stroke" textLength="7.4" lengthAdjust="spacingAndGlyphs">31</text>
<text x="325" y="175.3" text-anchor="middle" font-size="8" font-weight="bold" fill="#111" stroke="#fff" stroke-width="1.7" stroke-linejoin="round" paint-order="stroke" textLength="7.4" lengthAdjust="spacingAndGlyphs">92</text>
</svg><!--/MARK--><!--TIP-->
<div class="a" style="left:219px;top:55.4px;width:92.7px;height:79.2px;background:#fff;border-radius:6px;box-shadow:0 1px 3px rgba(0,0,0,.25)"></div>
<svg class="a" style="left:236px;top:134px" width="20" height="7" viewBox="0 0 20 7"><path d="M0 0 L9.5 5.8 L17 0Z" fill="#fff"/></svg>
<div class="t" style="left:219px;top:63.5px;width:92.7px;text-align:center;font-size:8px;line-height:9px;color:#222">Bishkek<br>2022-02-01 6:00 PM<br>(LT)</div>
<div class="a" style="left:228px;top:91px;width:74.7px;height:35.5px;background:#fff;border:1px solid #1c3f6a"></div>
<div class="a" style="left:228px;top:91px;width:74.7px;height:16.6px;background:#0b4a86"></div>
<div class="a" style="left:275.7px;top:107.6px;width:27px;height:18.9px;background:#99004c"></div>
<div class="t" style="left:228px;top:95.5px;width:47.7px;text-align:center;font-size:8px;font-weight:bold;color:#fff">Pollutant</div>
<div class="t" style="left:275.7px;top:95.5px;width:27px;text-align:center;font-size:8px;font-weight:bold;color:#fff">AQI</div>
<div class="t" style="left:228px;top:114px;width:47.7px;text-align:center;font-size:8px;color:#333">PM2.5</div>
<div class="t" style="left:275.7px;top:114px;width:27px;text-align:center;font-size:8px;color:#fff">238</div>
<!--/TIP-->

<!-- right column -->
<div class="a sh" style="left:425px;top:4px;width:192px;height:20px"></div>
<div class="t" style="left:428.8px;top:10px;font-size:8px;font-weight:bold;color:#fff;letter-spacing:-0.2px">Select a City</div>
<div class="a sel" style="left:425px;top:24px;width:192px;height:22px"></div>
<div class="t" style="left:432px;top:31.8px;font-size:8.6px;color:#333;letter-spacing:-0.3px">Bishkek</div>
<svg class="a" style="left:594.5px;top:32.2px" width="6" height="6.5" viewBox="0 0 6 6.5"><path d="M0.6 0.6 L5.4 5.9 M5.4 0.6 L0.6 5.9" stroke="#888" stroke-width="0.9"/></svg>
<div class="a" style="left:605px;top:34px;width:0;height:0;border-left:3px solid transparent;border-right:3px solid transparent;border-top:3px solid #999"></div>

<div class="a sh" style="left:425px;top:58px;width:192px;height:21px"></div>
<div class="t" style="left:428.8px;top:64.5px;font-size:8px;font-weight:bold;color:#fff;letter-spacing:-0.2px">Select a Parameter</div>
<div class="a sel" style="left:425px;top:79px;width:192px;height:22px"></div>
<div class="t" style="left:432px;top:86.8px;font-size:8.6px;color:#333;letter-spacing:-0.3px">PM2.5</div>
<svg class="a" style="left:594.5px;top:87.2px" width="6" height="6.5" viewBox="0 0 6 6.5"><path d="M0.6 0.6 L5.4 5.9 M5.4 0.6 L0.6 5.9" stroke="#888" stroke-width="0.9"/></svg>
<div class="a" style="left:605px;top:89px;width:0;height:0;border-left:3px solid transparent;border-right:3px solid transparent;border-top:3px solid #999"></div>

<div class="a" style="left:424.5px;top:113px;width:193px;height:41px;background:#fff;border:1px solid #d8d8d8"></div>
<div class="t" style="left:431.8px;top:119px;font-size:9px;color:#222;letter-spacing:-0.2px">Bishkek</div>
<svg class="a" style="left:590.5px;top:128px" width="20.5" height="20" viewBox="0 0 20.5 20"><rect width="20.5" height="20" fill="#efb02f"/><circle cx="4.3" cy="15.6" r="2.1" fill="#fff"/><path d="M2.6 8.6 A8.4 8.4 0 0 1 11 17" fill="none" stroke="#fff" stroke-width="2.4"/><path d="M2.6 3.2 A13.8 13.8 0 0 1 16.4 17" fill="none" stroke="#fff" stroke-width="2.4"/></svg>

<div class="t" style="left:424.5px;top:161.3px;font-size:6.4px;color:#777;line-height:11.5px">Note: Values above 500 are considered Beyond the AQI. Follow<br>recommendations for the Hazardous category. Additional<br>information on reducing exposure to extremely high levels of particle<br>pollution is available <b style="color:#1c3a66;text-decoration:underline">here</b>.</div>

<!-- tabs -->
<div class="a" style="left:5px;top:275px;width:61px;height:17.5px;background:#fff;border:1px solid #ccc;border-top:2px solid #1d4659;border-bottom:none;border-radius:3px 3px 0 0"></div>
<div class="t" style="left:5px;top:281.3px;width:61px;text-align:center;font-size:9px;letter-spacing:-0.5px;color:#333">AQI</div>
<div class="a tab" style="left:68px;top:275.5px;width:97px;height:17px"></div>
<div class="t" style="left:68px;top:281.3px;width:97px;text-align:center;font-size:9px;letter-spacing:-0.45px;color:#6a6a6a">Concentration</div>
<div class="a tab" style="left:167px;top:275.5px;width:79px;height:17px"></div>
<div class="t" style="left:167px;top:281.3px;width:79px;text-align:center;font-size:9px;letter-spacing:-0.35px;color:#6a6a6a">Historical</div>
<div class="a" style="left:5px;top:292px;width:613px;height:1px;background:#c9c9c9"></div>
<div class="t" style="left:5px;top:301.5px;font-size:8.15px;color:#333">Learn more about how the Air Quality Index [AQI] is calculated from the EPA <b style="color:#1c3a66;text-decoration:underline;font-weight:normal">here</b>.</div>

<!-- chart -->
<div class="a" style="left:5px;top:321.5px;width:459px;height:178.5px;background:#fff"></div>
<div class="t" style="left:192.8px;top:327.6px;font-size:10.5px;color:#3a3a3a;letter-spacing:0.42px">Bishkek - PM2.5</div>
<!--CHART--><svg class="a" style="left:0;top:0" width="626" height="500" viewBox="0 0 626 500">
<text x="39" y="467.3" text-anchor="end" font-size="7" fill="#666">0</text>
<line x1="47.6" x2="458" y1="443.5" y2="443.5" stroke="#e6e6e6" stroke-width="1"/>
<text x="39" y="446.0" text-anchor="end" font-size="7" fill="#666">100</text>
<line x1="47.6" x2="458" y1="422.2" y2="422.2" stroke="#e6e6e6" stroke-width="1"/>
<text x="39" y="424.7" text-anchor="end" font-size="7" fill="#666">200</text>
<line x1="47.6" x2="458" y1="400.9" y2="400.9" stroke="#e6e6e6" stroke-width="1"/>
<text x="39" y="403.4" text-anchor="end" font-size="7" fill="#666">300</text>
<line x1="47.6" x2="458" y1="379.6" y2="379.6" stroke="#e6e6e6" stroke-width="1"/>
<text x="39" y="382.1" text-anchor="end" font-size="7" fill="#666">400</text>
<line x1="47.6" x2="458" y1="358.3" y2="358.3" stroke="#e6e6e6" stroke-width="1"/>
<text x="39" y="360.8" text-anchor="end" font-size="7" fill="#666">500</text>
<line x1="47.6" x2="458" y1="465.3" y2="465.3" stroke="#ccd6eb" stroke-width="1"/>
<line x1="47.6" x2="47.6" y1="464.8" y2="469.8" stroke="#ccd6eb" stroke-width="1"/>
<line x1="64.7" x2="64.7" y1="464.8" y2="469.8" stroke="#ccd6eb" stroke-width="1"/>
<line x1="81.8" x2="81.8" y1="464.8" y2="469.8" stroke="#ccd6eb" stroke-width="1"/>
<line x1="98.9" x2="98.9" y1="464.8" y2="469.8" stroke="#ccd6eb" stroke-width="1"/>
<line x1="116.0" x2="116.0" y1="464.8" y2="469.8" stroke="#ccd6eb" stroke-width="1"/>
<line x1="133.1" x2="133.1" y1="464.8" y2="469.8" stroke="#ccd6eb" stroke-width="1"/>
<line x1="150.2" x2="150.2" y1="464.8" y2="469.8" stroke="#ccd6eb" stroke-width="1"/>
<line x1="167.3" x2="167.3" y1="464.8" y2="469.8" stroke="#ccd6eb" stroke-width="1"/>
<line x1="184.4" x2="184.4" y1="464.8" y2="469.8" stroke="#ccd6eb" stroke-width="1"/>
<line x1="201.5" x2="201.5" y1="464.8" y2="469.8" stroke="#ccd6eb" stroke-width="1"/>
<line x1="218.6" x2="218.6" y1="464.8" y2="469.8" stroke="#ccd6eb" stroke-width="1"/>
<line x1="235.7" x2="235.7" y1="464.8" y2="469.8" stroke="#ccd6eb" stroke-width="1"/>
<line x1="252.8" x2="252.8" y1="464.8" y2="469.8" stroke="#ccd6eb" stroke-width="1"/>
<line x1="269.9" x2="269.9" y1="464.8" y2="469.8" stroke="#ccd6eb" stroke-width="1"/>
<line x1="287.0" x2="287.0" y1="464.8" y2="469.8" stroke="#ccd6eb" stroke-width="1"/>
<line x1="304.1" x2="304.1" y1="464.8" y2="469.8" stroke="#ccd6eb" stroke-width="1"/>
<line x1="321.2" x2="321.2" y1="464.8" y2="469.8" stroke="#ccd6eb" stroke-width="1"/>
<line x1="338.3" x2="338.3" y1="464.8" y2="469.8" stroke="#ccd6eb" stroke-width="1"/>
<line x1="355.4" x2="355.4" y1="464.8" y2="469.8" stroke="#ccd6eb" stroke-width="1"/>
<line x1="372.5" x2="372.5" y1="464.8" y2="469.8" stroke="#ccd6eb" stroke-width="1"/>
<line x1="389.6" x2="389.6" y1="464.8" y2="469.8" stroke="#ccd6eb" stroke-width="1"/>
<line x1="406.7" x2="406.7" y1="464.8" y2="469.8" stroke="#ccd6eb" stroke-width="1"/>
<line x1="423.8" x2="423.8" y1="464.8" y2="469.8" stroke="#ccd6eb" stroke-width="1"/>
<line x1="440.9" x2="440.9" y1="464.8" y2="469.8" stroke="#ccd6eb" stroke-width="1"/>
<line x1="458.0" x2="458.0" y1="464.8" y2="469.8" stroke="#ccd6eb" stroke-width="1"/>
<rect x="52.1" y="427.7" width="9.0" height="37.1" fill="#ff0000" stroke="#7a0000" stroke-width="0.8"/>
<text x="57.4" y="473.5" text-anchor="end" font-size="7.4" fill="#707070" transform="rotate(-45 57.4 473.5)">7 PM</text>
<rect x="69.2" y="428.6" width="9.0" height="36.2" fill="#ff0000" stroke="#7a0000" stroke-width="0.8"/>
<text x="74.5" y="473.5" text-anchor="end" font-size="7.4" fill="#707070" transform="rotate(-45 74.5 473.5)">8 PM</text>
<rect x="86.3" y="427.7" width="9.0" height="37.1" fill="#ff0000" stroke="#7a0000" stroke-width="0.8"/>
<text x="91.5" y="473.5" text-anchor="end" font-size="7.4" fill="#707070" transform="rotate(-45 91.5 473.5)">9 PM</text>
<rect x="103.4" y="426.5" width="9.0" height="38.3" fill="#ff0000" stroke="#7a0000" stroke-width="0.8"/>
<text x="108.7" y="473.5" text-anchor="end" font-size="7.4" fill="#707070" transform="rotate(-45 108.7 473.5)">10 PM</text>
<rect x="120.5" y="427.3" width="9.0" height="37.5" fill="#ff0000" stroke="#7a0000" stroke-width="0.8"/>
<text x="125.8" y="473.5" text-anchor="end" font-size="7.4" fill="#707070" transform="rotate(-45 125.8 473.5)">11 PM</text>
<rect x="137.6" y="426.9" width="9.0" height="37.9" fill="#ff0000" stroke="#7a0000" stroke-width="0.8"/>
<text x="142.8" y="473.5" text-anchor="end" font-size="7.4" fill="#707070" transform="rotate(-45 142.8 473.5)">2022 12 AM</text>
<rect x="154.7" y="426.0" width="9.0" height="38.8" fill="#ff0000" stroke="#7a0000" stroke-width="0.8"/>
<text x="159.9" y="473.5" text-anchor="end" font-size="7.4" fill="#707070" transform="rotate(-45 159.9 473.5)">1 AM</text>
<rect x="171.8" y="425.2" width="9.0" height="39.6" fill="#ff0000" stroke="#7a0000" stroke-width="0.8"/>
<text x="177.0" y="473.5" text-anchor="end" font-size="7.4" fill="#707070" transform="rotate(-45 177.0 473.5)">2 AM</text>
<rect x="188.9" y="425.4" width="9.0" height="39.4" fill="#ff0000" stroke="#7a0000" stroke-width="0.8"/>
<text x="194.2" y="473.5" text-anchor="end" font-size="7.4" fill="#707070" transform="rotate(-45 194.2 473.5)">3 AM</text>
<rect x="206.0" y="425.4" width="9.0" height="39.4" fill="#ff0000" stroke="#7a0000" stroke-width="0.8"/>
<text x="211.2" y="473.5" text-anchor="end" font-size="7.4" fill="#707070" transform="rotate(-45 211.2 473.5)">4 AM</text>
<rect x="223.1" y="425.4" width="9.0" height="39.4" fill="#ff0000" stroke="#7a0000" stroke-width="0.8"/>
<text x="228.3" y="473.5" text-anchor="end" font-size="7.4" fill="#707070" transform="rotate(-45 228.3 473.5)">5 AM</text>
<rect x="240.2" y="425.4" width="9.0" height="39.4" fill="#ff0000" stroke="#7a0000" stroke-width="0.8"/>
<text x="245.4" y="473.5" text-anchor="end" font-size="7.4" fill="#707070" transform="rotate(-45 245.4 473.5)">6 AM</text>
<rect x="257.3" y="425.4" width="9.0" height="39.4" fill="#ff0000" stroke="#7a0000" stroke-width="0.8"/>
<text x="262.6" y="473.5" text-anchor="end" font-size="7.4" fill="#707070" transform="rotate(-45 262.6 473.5)">7 AM</text>
<rect x="274.4" y="426.2" width="9.0" height="38.6" fill="#ff0000" stroke="#7a0000" stroke-width="0.8"/>
<text x="279.7" y="473.5" text-anchor="end" font-size="7.4" fill="#707070" transform="rotate(-45 279.7 473.5)">8 AM</text>
<rect x="291.5" y="426.2" width="9.0" height="38.6" fill="#ff0000" stroke="#7a0000" stroke-width="0.8"/>
<text x="296.8" y="473.5" text-anchor="end" font-size="7.4" fill="#707070" transform="rotate(-45 296.8 473.5)">9 AM</text>
<rect x="308.6" y="426.9" width="9.0" height="37.9" fill="#ff0000" stroke="#7a0000" stroke-width="0.8"/>
<text x="313.9" y="473.5" text-anchor="end" font-size="7.4" fill="#707070" transform="rotate(-45 313.9 473.5)">10 AM</text>
<rect x="325.7" y="426.2" width="9.0" height="38.6" fill="#ff0000" stroke="#7a0000" stroke-width="0.8"/>
<text x="331.0" y="473.5" text-anchor="end" font-size="7.4" fill="#707070" transform="rotate(-45 331.0 473.5)">11 AM</text>
<rect x="342.8" y="426.2" width="9.0" height="38.6" fill="#ff0000" stroke="#7a0000" stroke-width="0.8"/>
<text x="348.1" y="473.5" text-anchor="end" font-size="7.4" fill="#707070" transform="rotate(-45 348.1 473.5)">12 PM</text>
<rect x="359.9" y="423.5" width="9.0" height="41.3" fill="#ff0000" stroke="#7a0000" stroke-width="0.8"/>
<text x="365.2" y="473.5" text-anchor="end" font-size="7.4" fill="#707070" transform="rotate(-45 365.2 473.5)">1 PM</text>
<rect x="377.0" y="419.0" width="9.0" height="45.8" fill="#99004c" stroke="#4a0024" stroke-width="0.8"/>
<text x="382.3" y="473.5" text-anchor="end" font-size="7.4" fill="#707070" transform="rotate(-45 382.3 473.5)">2 PM</text>
<rect x="394.1" y="418.4" width="9.0" height="46.4" fill="#99004c" stroke="#4a0024" stroke-width="0.8"/>
<text x="399.4" y="473.5" text-anchor="end" font-size="7.4" fill="#707070" transform="rotate(-45 399.4 473.5)">3 PM</text>
<rect x="411.2" y="416.0" width="9.0" height="48.8" fill="#99004c" stroke="#4a0024" stroke-width="0.8"/>
<text x="416.5" y="473.5" text-anchor="end" font-size="7.4" fill="#707070" transform="rotate(-45 416.5 473.5)">4 PM</text>
<rect x="428.3" y="414.5" width="9.0" height="50.3" fill="#99004c" stroke="#4a0024" stroke-width="0.8"/>
<text x="433.6" y="473.5" text-anchor="end" font-size="7.4" fill="#707070" transform="rotate(-45 433.6 473.5)">5 PM</text>
<rect x="445.4" y="414.1" width="9.0" height="50.7" fill="#99004c" stroke="#4a0024" stroke-width="0.8"/>
<text x="450.7" y="473.5" text-anchor="end" font-size="7.4" fill="#707070" transform="rotate(-45 450.7 473.5)">6 PM</text>
<text x="0" y="0" font-size="7.2" fill="#333" transform="translate(20.9 411.2) rotate(-90)" text-anchor="middle">AQI</text>
</svg><!--/CHART-->

<!-- current conditions -->
<div class="a" style="left:473px;top:322px;width:145px;height:173px;background:#ececec;border:1px solid #3d5c66"></div>
<div class="a" style="left:473px;top:322px;width:145px;height:43.5px;background:#0b4d8c"></div>
<div class="a" style="left:473px;top:365.5px;width:145px;height:68px;background:#99004c"></div>
<div class="t" style="left:473px;top:327.5px;width:145px;text-align:center;font-size:9px;font-weight:bold;color:#fff;letter-spacing:-0.2px">Current Conditions</div>
<div class="t" style="left:473px;top:340.5px;width:145px;text-align:center;font-size:7px;font-weight:bold;color:#fff;letter-spacing:-0.2px">observed at</div>
<div class="t" style="left:473px;top:351.5px;width:145px;text-align:center;font-size:9px;font-weight:bold;color:#fff;letter-spacing:-0.15px">Feb 1, 2022 6:00 PM (LT)</div>
<div class="t" style="left:473px;top:375.8px;width:145px;text-align:center;font-size:12px;font-weight:bold;color:#fff;line-height:16.6px;letter-spacing:-0.25px">238 AQI<br>Very Unhealthy<br>PM2.5</div>
<div class="t" style="left:473px;top:440.5px;width:145px;text-align:center;font-size:6.9px;font-weight:bold;color:#333">Health Message</div>
<div class="t" style="left:476.4px;top:454px;font-size:7px;color:#333;line-height:12.4px">AQI values between 201 and 300 trigger a<br>health alert, meaning everyone may<br>experience more serious health effects.</div>
</div></body></html>
